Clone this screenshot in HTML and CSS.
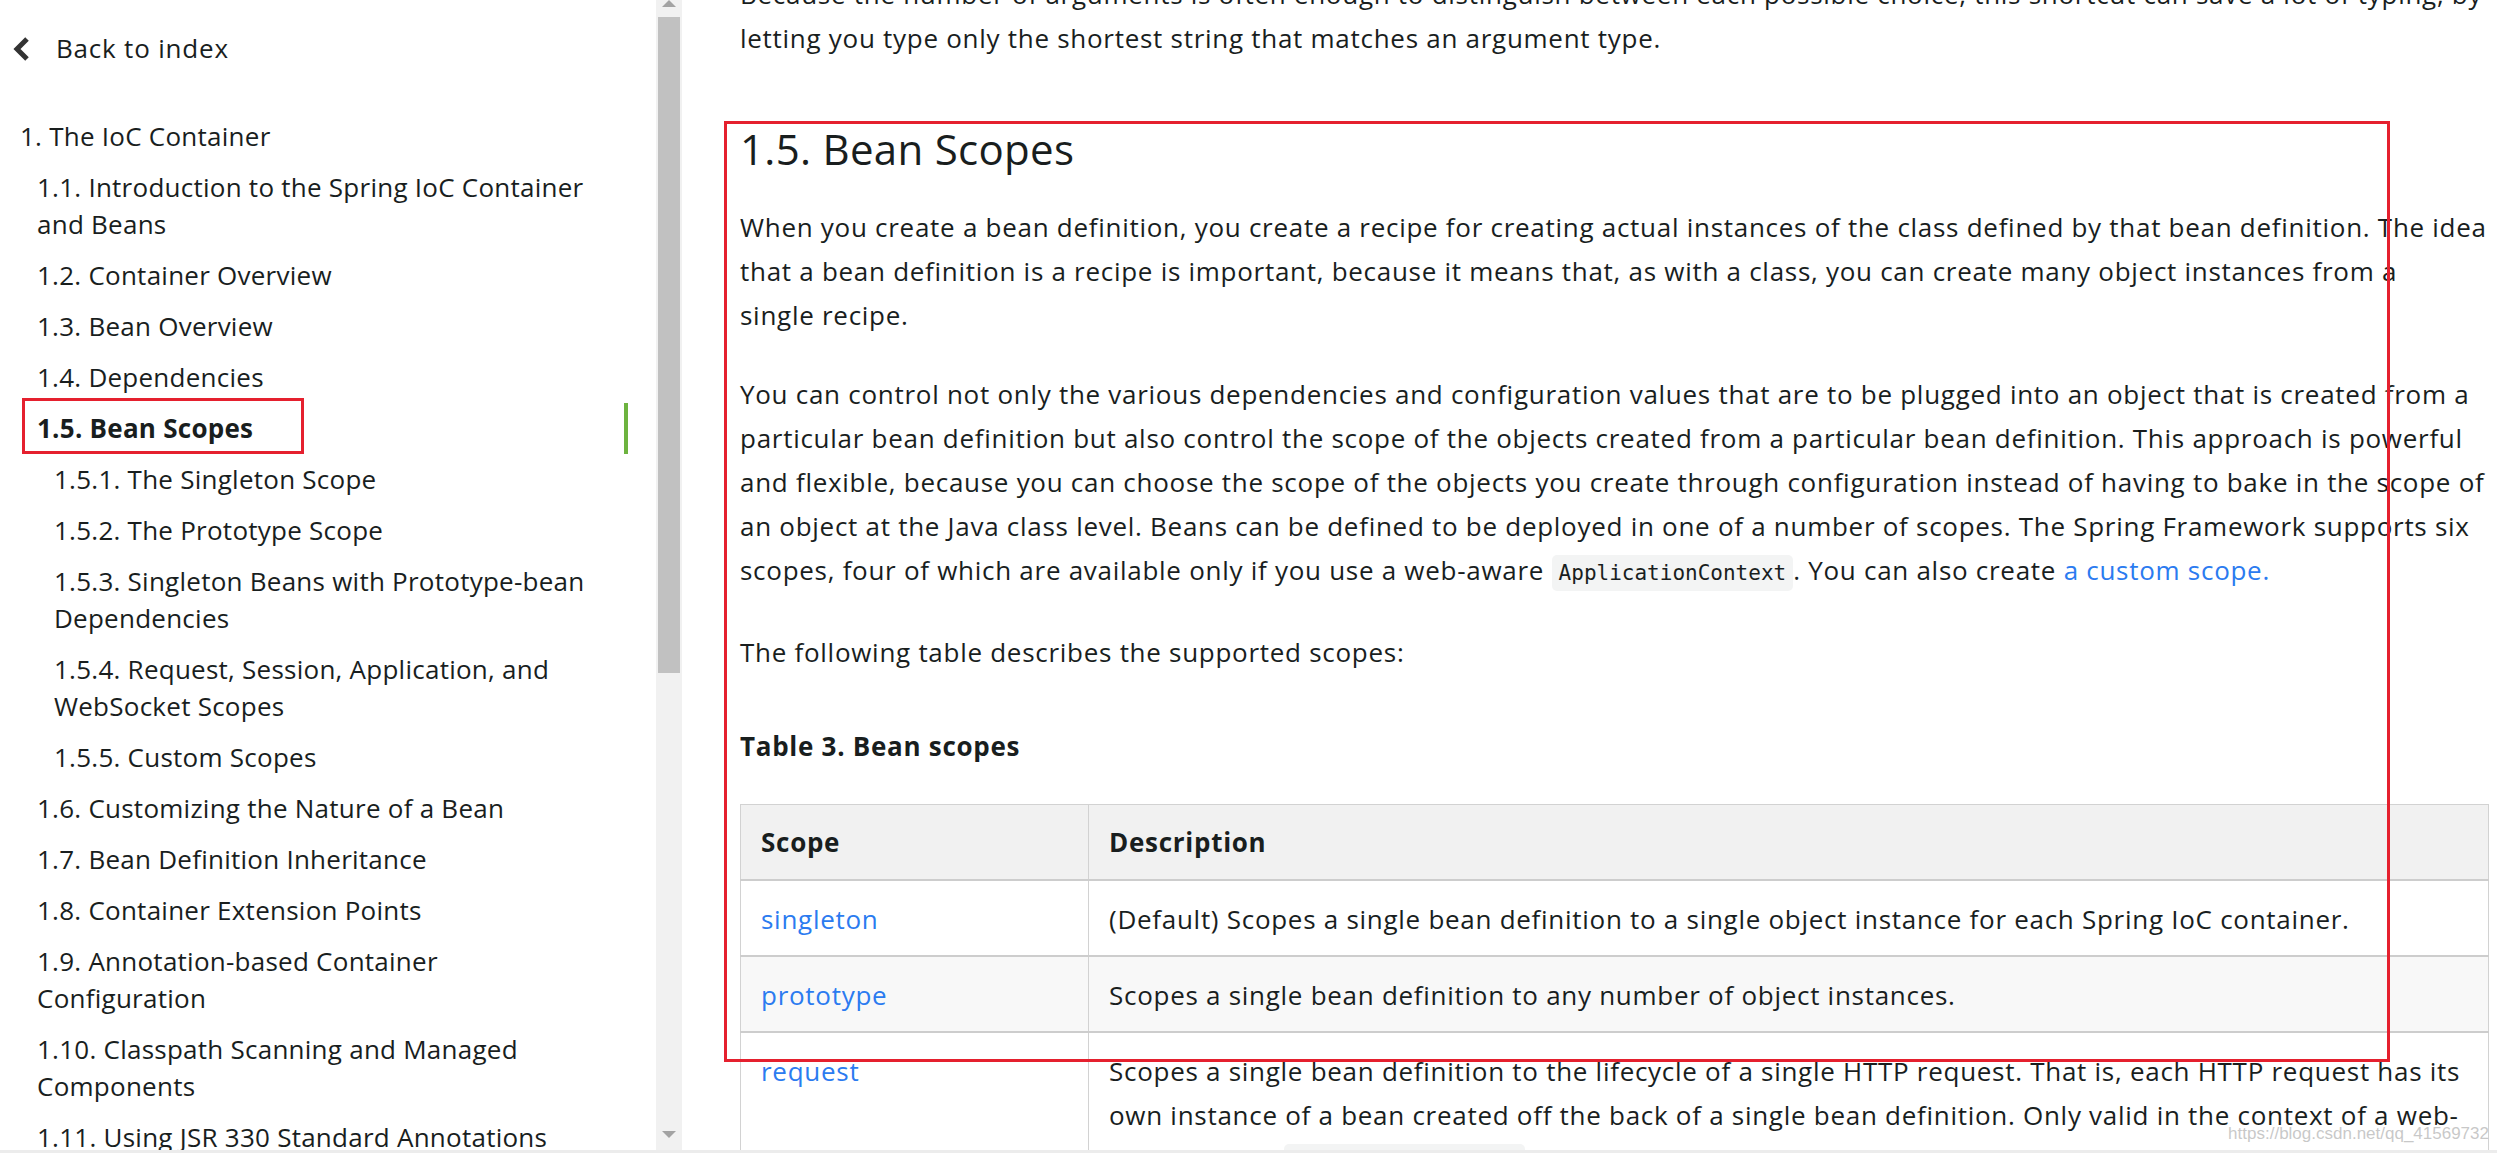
FILE: index.html
```html
<!DOCTYPE html>
<html lang="en">
<head>
<meta charset="utf-8">
<title>1.5. Bean Scopes</title>
<link rel="stylesheet" href="styles.css">
</head>
<body>
<div class="window">
  <aside class="sidebar">
    <a class="back" href="#">
      <svg class="chev" width="20" height="26" viewBox="0 0 20 26"><path d="M15 3 L5 13 L15 23" fill="none" stroke="#333" stroke-width="5" stroke-linejoin="miter"/></svg>
      <span>Back to index</span>
    </a>
    <ul class="toc">
      <li><a href="#">1. The IoC Container</a>
        <ul>
          <li><a href="#">1.1. Introduction to the Spring IoC Container and Beans</a></li>
          <li><a href="#">1.2. Container Overview</a></li>
          <li><a href="#">1.3. Bean Overview</a></li>
          <li><a href="#">1.4. Dependencies</a></li>
          <li><a class="active" href="#">1.5. Bean Scopes</a>
            <ul>
              <li><a href="#">1.5.1. The Singleton Scope</a></li>
              <li><a href="#">1.5.2. The Prototype Scope</a></li>
              <li><a href="#">1.5.3. Singleton Beans with Prototype-bean Dependencies</a></li>
              <li><a href="#">1.5.4. Request, Session, Application, and WebSocket Scopes</a></li>
              <li><a href="#">1.5.5. Custom Scopes</a></li>
            </ul>
          </li>
          <li><a href="#">1.6. Customizing the Nature of a Bean</a></li>
          <li><a href="#">1.7. Bean Definition Inheritance</a></li>
          <li><a href="#">1.8. Container Extension Points</a></li>
          <li><a href="#">1.9. Annotation-based Container Configuration</a></li>
          <li><a href="#">1.10. Classpath Scanning and Managed Components</a></li>
          <li><a href="#">1.11. Using JSR 330 Standard Annotations</a></li>
        </ul>
      </li>
    </ul>
  </aside>
  <div class="scrollbar">
    <span class="arrow up"></span>
    <span class="thumb"></span>
    <span class="arrow down"></span>
  </div>
  <main class="main">
    <div class="content">
      <p>Because the number of arguments is often enough to distinguish between each possible choice, this shortcut can save a lot of typing, by letting you type only the shortest string that matches an argument type.</p>
      <section class="sect">
        <h2>1.5. Bean Scopes</h2>
        <p>When you create a bean definition, you create a recipe for creating actual instances of the class defined by that bean definition. The idea that a bean definition is a recipe is important, because it means that, as with a class, you can create many object instances from a<br>single recipe.</p>
        <p>You can control not only the various dependencies and configuration values that are to be plugged into an object that is created from a particular bean definition but also control the scope of the objects created from a particular bean definition. This approach is powerful and flexible, because you can choose the scope of the objects you create through configuration instead of having to bake in the scope of an object at the Java class level. Beans can be defined to be deployed in one of a number of scopes. The Spring Framework supports six scopes, four of which are available only if you use a web-aware <code>ApplicationContext</code>. You can also create <a href="#">a custom scope.</a></p>
        <p>The following table describes the supported scopes:</p>
        <div class="table-title">Table 3. Bean scopes</div>
        <table class="scopes">
          <thead>
            <tr><th class="c1">Scope</th><th>Description</th></tr>
          </thead>
          <tbody>
            <tr><td><a href="#">singleton</a></td><td>(Default) Scopes a single bean definition to a single object instance for each Spring IoC container.</td></tr>
            <tr class="alt"><td><a href="#">prototype</a></td><td>Scopes a single bean definition to any number of object instances.</td></tr>
            <tr><td><a href="#">request</a></td><td>Scopes a single bean definition to the lifecycle of a single HTTP request. That is, each HTTP request has its own instance of a bean created off the back of a single bean definition. Only valid in the context of a web-aware Spring <code>ApplicationContext</code>.</td></tr>
          </tbody>
        </table>
      </section>
    </div>
    <div class="mark-box"></div>
    <div class="watermark">https://blog.csdn.net/qq_41569732</div>
  </main>
</div>
<div class="hbar"></div>
</body>
</html>
```
FILE: styles.css
```css
html, body {
  margin: 0;
  padding: 0;
}
body {
  width: 2497px;
  height: 1153px;
  overflow: hidden;
  display: flex;
  flex-direction: column;
  background: #fff;
  color: #191e1e;
  font-family: "Open Sans", "Noto Sans", sans-serif;
  font-size: 26px;
}
a { text-decoration: none; color: inherit; }

.window {
  flex: 1;
  display: flex;
  min-height: 0;
}
.hbar {
  height: 3px;
  background: #ececec;
}

/* ---------- sidebar ---------- */
.sidebar {
  width: 656px;
  flex: none;
  line-height: 37px;
  letter-spacing: 0.25px;
  overflow: hidden;
}
.back {
  display: flex;
  align-items: center;
  height: 37px;
  margin-top: 30px;
  padding-left: 12px;
  letter-spacing: 0.8px;
}
.back .chev { margin-right: 24px; }

.toc, .toc ul {
  list-style: none;
  margin: 0;
  padding: 0;
}
.toc {
  margin-top: 44px;
  padding-left: 20px;
  padding-right: 28px;
}
.toc ul { padding-left: 17px; }
.toc a {
  display: block;
  padding: 7px 32px 7px 0;
}
.toc a.active {
  position: relative;
  font-weight: 700;
  box-shadow: inset -4px 0 0 #6db33f;
}
.toc a.active::after {
  content: "";
  position: absolute;
  left: -15px;
  top: -5px;
  width: 282px;
  height: 56px;
  box-sizing: border-box;
  border: 3px solid #e5202e;
}

/* ---------- fake scrollbar ---------- */
.scrollbar {
  width: 26px;
  flex: none;
  background: #f1f1f1;
  display: flex;
  flex-direction: column;
  align-items: center;
}
.arrow {
  width: 0;
  height: 0;
  border-left: 7px solid transparent;
  border-right: 7px solid transparent;
}
.arrow.up {
  border-bottom: 7px solid #a3a3a3;
  margin-bottom: 10px;
}
.thumb {
  width: 22px;
  height: 656px;
  background: #c1c1c1;
}
.arrow.down {
  border-top: 7px solid #a3a3a3;
  margin-top: auto;
  margin-bottom: 12px;
}

/* ---------- main ---------- */
.main {
  flex: 1;
  position: relative;
  overflow: hidden;
  padding: 0 8px 0 58px;
}
.content {
  margin-top: -28px;
  line-height: 44px;
  letter-spacing: 0.72px;
}
.content p {
  margin: 0 0 35px;
}
.sect h2 {
  font-weight: 400;
  font-size: 42px;
  letter-spacing: 0.3px;
  line-height: 50px;
  margin: 64px 0 31px;
}
.content a { color: #2b7bf0; }
code {
  font-family: "DejaVu Sans Mono", "Liberation Mono", monospace;
  font-size: 21px;
  letter-spacing: 0;
  background: #f3f4f4;
  padding: 6px 7px;
  border-radius: 5px;
}
.table-title {
  font-weight: 700;
  margin: 50px 0 36px;
}
.scopes {
  width: 100%;
  border-collapse: collapse;
  border: 1px solid #d2d2d2;
}
.scopes th, .scopes td {
  text-align: left;
  vertical-align: top;
  padding: 16px 20px 14px;
  border-left: 1px solid #d2d2d2;
  border-right: 1px solid #d2d2d2;
}
.scopes th {
  background: #f1f1f1;
  font-weight: 700;
  padding: 15px 20px;
  border-bottom: 2px solid #cdcdcd;
}
.scopes .c1 { width: 307px; }
.scopes td { border-top: 2px solid #cdcdcd; }
.scopes tr.alt td { background: #f8f8f8; }

.mark-box {
  position: absolute;
  left: 42px;
  top: 121px;
  width: 1666px;
  height: 941px;
  box-sizing: border-box;
  border: 3px solid #e5202e;
  pointer-events: none;
}
.watermark {
  position: absolute;
  right: 8px;
  bottom: 6px;
  font-family: "Liberation Sans", Arial, sans-serif;
  font-size: 17px;
  letter-spacing: 0;
  color: rgba(190, 190, 190, 0.85);
}
```
